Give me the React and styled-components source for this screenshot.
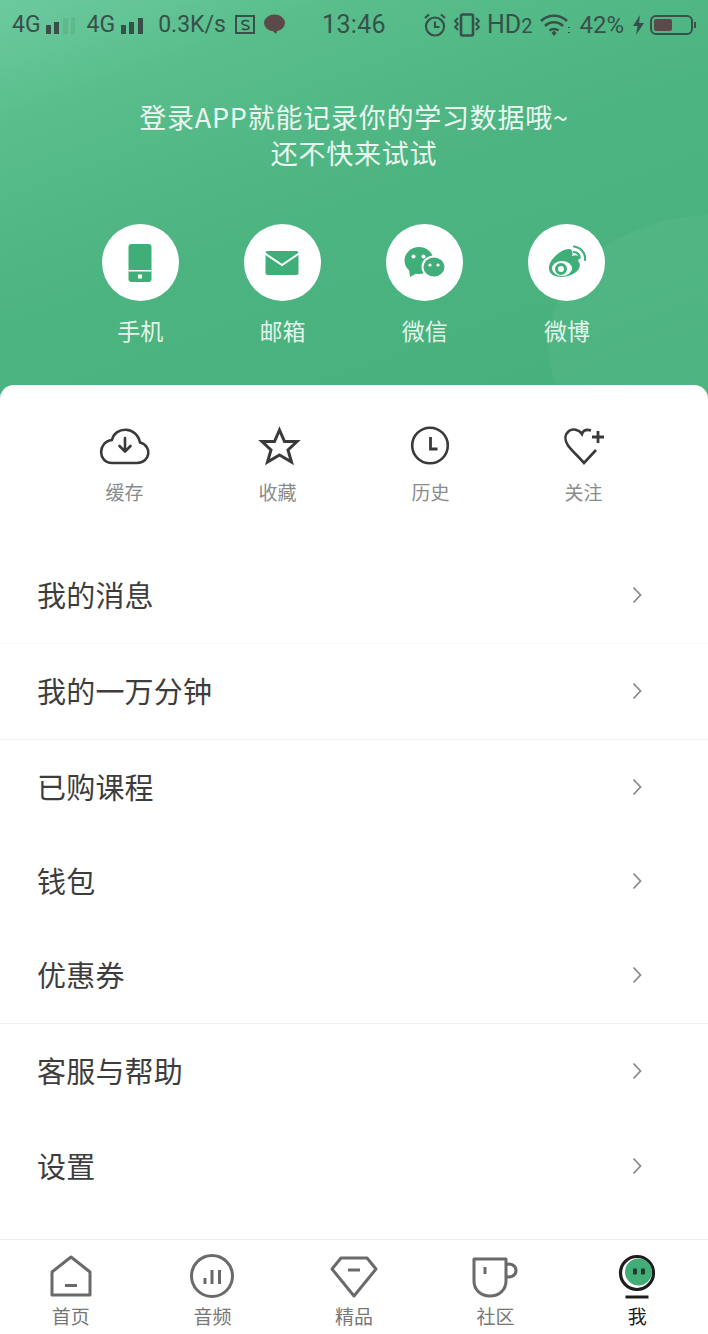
import React from 'react';
import styled, { createGlobalStyle } from 'styled-components';

const Global = createGlobalStyle`
  html, body { margin: 0; padding: 0; background: #fff; }
  body { font-family: Roboto, "Noto Sans CJK SC", sans-serif; }
  * { box-sizing: border-box; }
`;

const cjk = `"Noto Sans CJK SC", "Noto Sans", sans-serif`;
const green = '#3fae78';

const Page = styled.div`
  width: 708px; height: 1334px; display: flex; flex-direction: column;
  background: #fff; overflow: hidden; position: relative;
`;
const Hero = styled.header`
  position: relative; height: 400px; flex: none; overflow: hidden;
  background: linear-gradient(160deg, #6dcaa0 0%, #58bd8a 20%, #4cb481 50%, #46b07c 100%);
  &::after {
    content: ''; position: absolute; right: -170px; top: 215px; width: 330px; height: 260px;
    border-radius: 50%; background: rgba(255,255,255,.04);
  }
`;
const StatusBar = styled.div`
  position: relative; z-index: 1; height: 49px; padding: 0 12px;
  display: grid; grid-template-columns: 1fr auto 1fr; align-items: center;
  color: #38504a; font-family: Roboto, sans-serif;
`;
const StatusLeft = styled.div`display: flex; align-items: center;`;
const StatusRight = styled.div`display: flex; align-items: center; justify-content: flex-end;`;
const StatusText = styled.span`
  font-size: ${p => p.$size || 23}px; line-height: 1; white-space: nowrap;
  margin-left: ${p => p.$gap || 0}px;
`;
const StatusTime = styled.span`font-size: 25px; line-height: 1; letter-spacing: .3px;`;
const StatusIcon = styled.svg`
  display: block; flex: none; overflow: visible; margin-left: ${p => p.$gap || 0}px;
`;

const Slogan = styled.p`
  position: relative; z-index: 1; margin: 50px 0 0; text-align: center; color: #eaf7f0;
  font-family: ${cjk}; font-size: 27px; line-height: 36px; letter-spacing: .75px;
`;
const SocialRow = styled.div`
  position: relative; z-index: 1; margin-top: 53px; padding: 0 70px 0 69px;
  display: grid; grid-template-columns: repeat(4, 1fr);
`;
const Social = styled.div`display: flex; flex-direction: column; align-items: center;`;
const SocialDisc = styled.div`
  width: 77px; height: 77px; border-radius: 50%; background: #fff;
  display: flex; align-items: center; justify-content: center;
`;
const SocialLabel = styled.span`
  margin-top: 12px; font-family: ${cjk}; font-size: 23px; line-height: 34px; color: #e3f4ea;
`;

const Card = styled.main`
  position: relative; z-index: 2; margin-top: -15px; flex: 1; min-height: 0;
  background: #fff; border-radius: 14px 14px 0 0; display: flex; flex-direction: column;
`;
const Quick = styled.div`
  height: 163px; flex: none; padding: 42px 48px 0; display: grid; grid-template-columns: repeat(4, 1fr);
  align-content: start;
`;
const QuickItem = styled.div`display: flex; flex-direction: column; align-items: center;`;
const QuickIcon = styled.svg`display: block; width: 52px; height: 38px; overflow: visible;`;
const QuickLabel = styled.span`
  margin-top: 13px; font-family: ${cjk}; font-size: 19px; line-height: 28px; color: #8b8b8b;
`;
const Row = styled.div`
  height: ${p => p.$h}px; flex: none; padding: 0 66px 0 38px;
  display: flex; align-items: center; justify-content: space-between;
  border-bottom: 1px solid ${p => p.$line || 'transparent'};
`;
const RowTitle = styled.span`
  font-family: ${cjk}; font-size: 29px; line-height: 40px; color: #3d3d3d;
  margin: 0 0 3px -1px; letter-spacing: .2px;
`;
const Chevron = styled.svg`display: block; width: 10px; height: 18px; margin-top: -2px;`;

const Tabs = styled.nav`
  margin-top: auto; height: 95px; flex: none; border-top: 1px solid #ececec;
  display: grid; grid-template-columns: repeat(5, 1fr); padding-top: 14px;
`;
const Tab = styled.div`display: flex; flex-direction: column; align-items: center;`;
const TabIcon = styled.svg`display: block; width: 50px; height: 46px; overflow: visible;`;
const TabLabel = styled.span`
  margin-top: 3px; font-family: ${cjk}; font-size: 19px; line-height: 26px;
  color: ${p => (p.$active ? '#222' : '#777')};
`;

const Bars = ({ n, gap, faded }) => (
  <StatusIcon $gap={gap} width="22" height="20" viewBox="0 0 22 20" fill="#38504a">
    <rect x="0" y="10" width="5" height="9" />
    <rect x="8" y="7" width="5" height="12" />
    <rect x="17" y="3" width="5" height="16" opacity={n > 2 ? 1 : 0.12} />
    {faded && <rect x="25" y="2" width="4" height="17" opacity=".1" />}
  </StatusIcon>
);

const Status = () => (
  <StatusBar>
    <StatusLeft>
      <StatusText>4G</StatusText>
      <Bars n={2} gap={5} faded />
      <StatusText $gap={19}>4G</StatusText>
      <Bars n={3} gap={6} />
      <StatusText $gap={15}>0.3K/s</StatusText>
      <StatusIcon $gap={9} width="21" height="20" viewBox="0 0 21 20" fill="none" stroke="#38504a" strokeWidth="2">
        <path d="M1 1H19V18H1Z" />
        <path d="M14 6.500C12 5 7 5 7 8C7 11 14 9.500 14 12.500C14 15 9 15 7 13.500" strokeWidth="1.700" />
      </StatusIcon>
      <StatusIcon $gap={8} width="21" height="21" viewBox="0 0 21 21" fill="#5c4a4a">
        <ellipse cx="10.500" cy="9" rx="10.500" ry="8.500" />
        <path d="M7 15L12 20L14 15Z" />
      </StatusIcon>
    </StatusLeft>
    <StatusTime>13:46</StatusTime>
    <StatusRight>
      <StatusIcon width="24" height="24" viewBox="0 0 24 24" fill="none" stroke="#38504a" strokeWidth="2.200">
        <circle cx="12" cy="13.500" r="9" />
        <path d="M12 8.500V14H16.500M2 5L6 1.500M22 5L18 1.500" />
      </StatusIcon>
      <StatusIcon $gap={7} width="26" height="24" viewBox="0 0 26 24" fill="none" stroke="#38504a" strokeWidth="2">
        <rect x="7" y="1.500" width="12" height="21" rx="1.500" strokeWidth="2.600" />
        <path d="M4 5L1 8L4 11L1 14L4 17M22 5L25 8L22 11L25 14L22 17" strokeWidth="1.800" />
      </StatusIcon>
      <StatusText $gap={7} $size={25}>HD<StatusText $size={20}>2</StatusText></StatusText>
      <StatusIcon $gap={8} width="31" height="24" viewBox="0 0 31 24" fill="none" stroke="#38504a" strokeWidth="2.600">
        <path d="M1 8C8 1 20 1 27 8M5 13C10 8 18 8 23 13M9.500 17.500C12 15.500 16 15.500 18.500 17.500" />
        <path d="M11.500 20L14 17.500L16.500 20L14 23Z" fill="#38504a" stroke="none" />
        <path d="M29 14L29 15M29 19L29 20" strokeWidth="2" />
      </StatusIcon>
      <StatusText $gap={8} $size={24}>42%</StatusText>
      <StatusIcon $gap={9} width="11" height="20" viewBox="0 0 11 20" fill="#38504a">
        <path d="M7 0L0 11H4.500L3 20L11 8H6Z" />
      </StatusIcon>
      <StatusIcon $gap={6} width="46" height="20" viewBox="0 0 46 20" fill="none" stroke="#38504a" strokeWidth="2">
        <rect x="1" y="1" width="41" height="18" rx="5" />
        <rect x="4" y="4" width="18" height="12" rx="2" fill="#5c4a4a" stroke="none" />
        <path d="M45 7V13" />
      </StatusIcon>
    </StatusRight>
  </StatusBar>
);

const PhoneIcon = () => (
  <svg width="24" height="38" viewBox="0 0 24 38">
    <rect x=".5" y="0" width="23" height="38" rx="3" fill={green} />
    <rect x=".5" y="26" width="23" height="1.500" fill="#fff" />
    <rect x="10" y="30.500" width="4" height="4" fill="#fff" />
  </svg>
);
const MailIcon = () => (
  <svg width="34" height="24" viewBox="0 0 34 24">
    <rect x=".5" y="0" width="33" height="24" rx="2" fill={green} />
    <path d="M0 2.500L17 14L34 2.500" fill="none" stroke="#fff" strokeWidth="2" />
  </svg>
);
const WechatIcon = () => (
  <svg width="42" height="32" viewBox="0 0 42 32">
    <ellipse cx="15" cy="13.500" rx="14.500" ry="13.500" fill={green} />
    <path d="M5 22L6 30L13 26Z" fill={green} />
    <ellipse cx="30" cy="20" rx="12.500" ry="11.500" fill="#fff" />
    <ellipse cx="30" cy="20" rx="10.500" ry="9.500" fill={green} />
    <circle cx="9.500" cy="9.500" r="2" fill="#fff" />
    <circle cx="19.500" cy="9.500" r="2" fill="#fff" />
    <circle cx="26" cy="18" r="1.600" fill="#fff" />
    <circle cx="34" cy="18" r="1.600" fill="#fff" />
  </svg>
);
const WeiboIcon = () => (
  <svg width="38" height="36" viewBox="0 0 38 36">
    <path d="M1 22C2 14 12 5 20 4C25 3.500 25 8 24 11C29 9 33 11 30 16C33 18 33 25 25 29C15 34 0 33 1 22Z" fill={green} />
    <ellipse cx="14" cy="23.500" rx="10" ry="7.500" fill="#fff" />
    <circle cx="13" cy="24" r="4.500" fill="none" stroke={green} strokeWidth="3" />
    <path d="M26 1.500C32 2 38 8 37 15" fill="none" stroke={green} strokeWidth="2.200" strokeLinecap="round" />
    <path d="M26 7C29 7 32 10 31.500 13" fill="none" stroke={green} strokeWidth="2.200" strokeLinecap="round" />
  </svg>
);

const stroke = { fill: 'none', stroke: '#3a3a3a', strokeWidth: 2.6 };
const CloudIcon = () => (
  <QuickIcon viewBox="0 0 52 38" {...stroke}>
    <path d="M13 36H38C51 36 54 19 41 15.500C38 -1 16 -1 13 13C-2 15 -1 36 13 36Z" strokeLinejoin="round" />
    <path d="M26 11V24M20.500 19L26 24.500L31.500 19" strokeLinecap="round" strokeLinejoin="round" />
  </QuickIcon>
);
const StarIcon = () => (
  <QuickIcon viewBox="0 0 52 38" {...stroke} strokeWidth="3">
    <path d="M27.500 3L32.500 14.500H45L36 23L39.500 35L27.500 28L15.500 35L19 23L10 14.500H22.500Z" />
  </QuickIcon>
);
const ClockIcon = () => (
  <QuickIcon viewBox="0 0 52 38" {...stroke}>
    <circle cx="25" cy="18.500" r="17.800" />
    <path d="M25.500 10V22H32.500" strokeWidth="2.800" />
  </QuickIcon>
);
const HeartPlusIcon = () => (
  <QuickIcon viewBox="0 0 52 38" {...stroke}>
    <path d="M33 3.500C28 2 25 4 24 7C21 2 14 1.500 11 4C6 8 7 14 10 18.500C13 23 21 30 26 36L38 23" />
    <path d="M40 4V16M34 10H46" strokeWidth="2.800" />
  </QuickIcon>
);

const tabStroke = { fill: 'none', stroke: '#6a6a6a', strokeWidth: 3 };
const HomeIcon = () => (
  <TabIcon viewBox="0 0 50 46" {...tabStroke}>
    <path d="M6 41V18L25 3L44 18V41Z" strokeLinejoin="round" />
    <path d="M19 31.500H31" />
  </TabIcon>
);
const AudioIcon = () => (
  <TabIcon viewBox="0 0 50 46" {...tabStroke}>
    <circle cx="25" cy="22" r="20.500" />
    <path d="M18 24V30M25 16V30M32.500 16V30" />
  </TabIcon>
);
const GemIcon = () => (
  <TabIcon viewBox="0 0 50 46" {...tabStroke}>
    <path d="M12 4H38L47 15L25 42L3 15Z" strokeLinejoin="round" />
    <path d="M19 16H31" />
  </TabIcon>
);
const CupIcon = () => (
  <TabIcon viewBox="0 0 50 46" {...tabStroke}>
    <path d="M3 5H35V27C35 36 28 42 19 42C10 42 3 36 3 27Z" strokeLinejoin="round" />
    <path d="M35 10.500C39 9 45 11 45 16.500C45 22 39 24 35 22.500" />
    <path d="M14 13V20" />
  </TabIcon>
);
const MeIcon = () => (
  <TabIcon viewBox="0 0 50 46">
    <circle cx="25" cy="19" r="16.500" fill="none" stroke="#1d1d1d" strokeWidth="3.200" />
    <circle cx="26.500" cy="18" r="13.500" fill="#42ad78" />
    <rect x="21" y="14.500" width="4" height="6" rx="1" fill="#1d3a2c" />
    <rect x="29" y="14.500" width="4" height="6" rx="1" fill="#1d3a2c" />
    <path d="M13.500 43H36.500" stroke="#1d1d1d" strokeWidth="3" />
  </TabIcon>
);

const socials = [
  ['手机', <PhoneIcon />],
  ['邮箱', <MailIcon />],
  ['微信', <WechatIcon />],
  ['微博', <WeiboIcon />],
];
const quicks = [
  ['缓存', <CloudIcon />],
  ['收藏', <StarIcon />],
  ['历史', <ClockIcon />],
  ['关注', <HeartPlusIcon />],
];
const rows = [
  ['我的消息', 96, '#f8f8f8'],
  ['我的一万分钟', 96, '#f2f2f2'],
  ['已购课程', 96],
  ['钱包', 92],
  ['优惠券', 96, '#f0f0f0'],
  ['客服与帮助', 96],
  ['设置', 94],
];
const tabs = [
  ['首页', <HomeIcon />],
  ['音频', <AudioIcon />],
  ['精品', <GemIcon />],
  ['社区', <CupIcon />],
  ['我', <MeIcon />, true],
];

export default function App() {
  return (
    <Page>
      <Global />
      <Hero>
        <Status />
        <Slogan>登录APP就能记录你的学习数据哦~<br />还不快来试试</Slogan>
        <SocialRow>
          {socials.map(([label, icon]) => (
            <Social key={label}>
              <SocialDisc>{icon}</SocialDisc>
              <SocialLabel>{label}</SocialLabel>
            </Social>
          ))}
        </SocialRow>
      </Hero>
      <Card>
        <Quick>
          {quicks.map(([label, icon]) => (
            <QuickItem key={label}>
              {icon}
              <QuickLabel>{label}</QuickLabel>
            </QuickItem>
          ))}
        </Quick>
        {rows.map(([title, h, line]) => (
          <Row key={title} $h={h} $line={line}>
            <RowTitle>{title}</RowTitle>
            <Chevron viewBox="0 0 10 18" fill="none" stroke="#8a8a8a" strokeWidth="1.800">
              <path d="M1.500 1.500L8.500 9L1.500 16.500" />
            </Chevron>
          </Row>
        ))}
        <Tabs>
          {tabs.map(([label, icon, active]) => (
            <Tab key={label}>
              {icon}
              <TabLabel $active={active}>{label}</TabLabel>
            </Tab>
          ))}
        </Tabs>
      </Card>
    </Page>
  );
}
